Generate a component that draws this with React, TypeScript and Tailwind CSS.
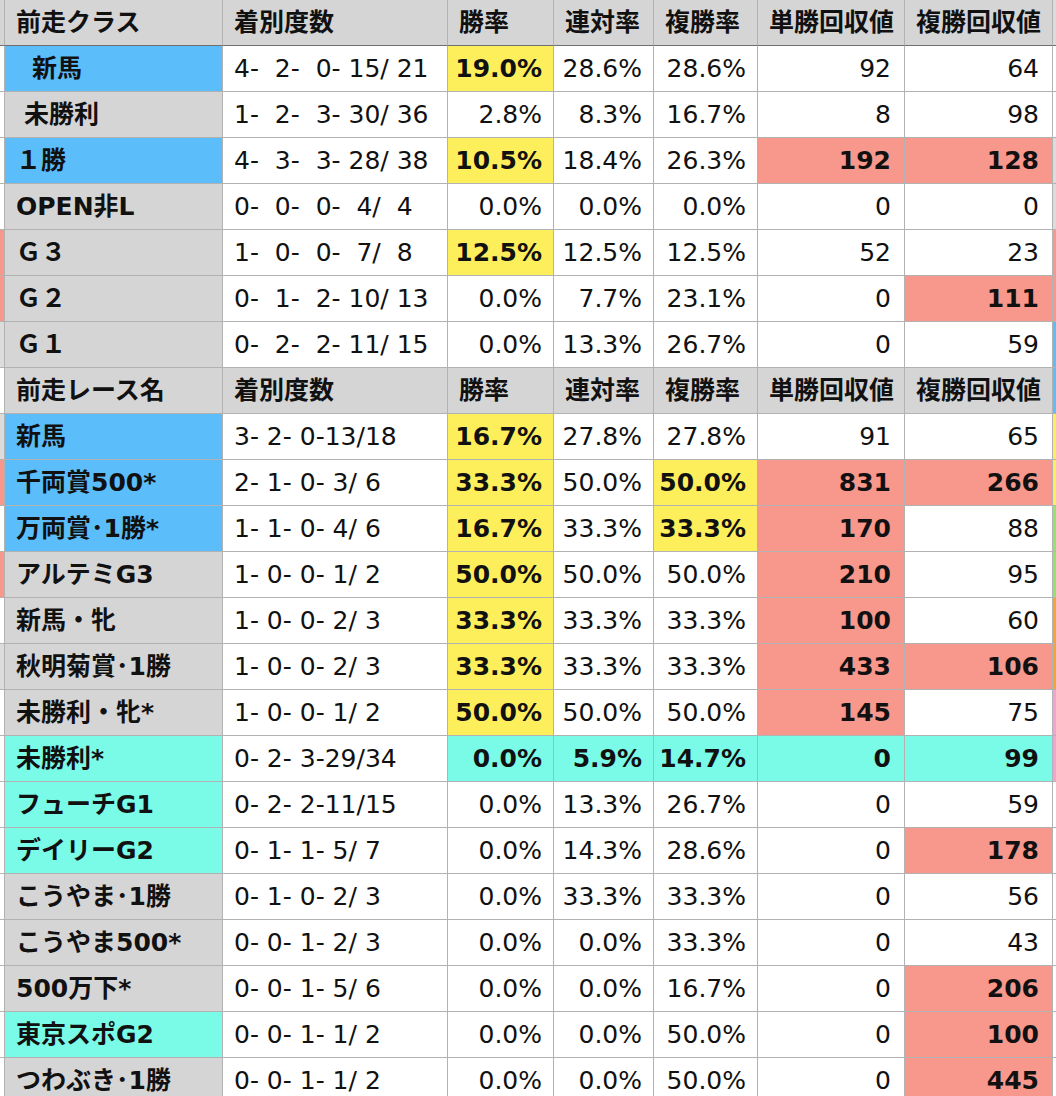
import React from "react";

// cell backgrounds, copied off the spreadsheet colours
const BLUE = "bg-[#5bbefb]";
const GRAY = "bg-[#d5d5d5]";
const YEL = "bg-[#fdef5b]";
const SAL = "bg-[#f8978b]";
const CYAN = "bg-[#7afbe7]";
const WHITE = "bg-white";
const LGRAY = "bg-[#dcdcdc]";
const GREEN = "bg-[#93e46c]";
const ORANGE = "bg-[#f6a532]";
const PINK = "bg-[#f3a2d2]";

type Stat = { t: string; bg?: string };

type RowData = {
  label: string;
  labelBg: string;
  indent?: string;
  rec: string;
  stats: Stat[]; // 勝率, 連対率, 複勝率, 単勝回収値, 複勝回収値
  left: string;
  right: string;
};

const HEAD1 = ["前走クラス", "着別度数", "勝率", "連対率", "複勝率", "単勝回収値", "複勝回収値"];
const HEAD2 = ["前走レース名", "着別度数", "勝率", "連対率", "複勝率", "単勝回収値", "複勝回収値"];

const s = (t: string, bg?: string): Stat => ({ t, bg });

const classRows: RowData[] = [
  { label: "新馬", labelBg: BLUE, indent: "pl-[27px]", rec: "4-  2-  0- 15/ 21", stats: [s("19.0%", YEL), s("28.6%"), s("28.6%"), s("92"), s("64")], left: WHITE, right: WHITE },
  { label: "未勝利", labelBg: GRAY, indent: "pl-[19px]", rec: "1-  2-  3- 30/ 36", stats: [s("2.8%"), s("8.3%"), s("16.7%"), s("8"), s("98")], left: WHITE, right: WHITE },
  { label: "１勝", labelBg: BLUE, rec: "4-  3-  3- 28/ 38", stats: [s("10.5%", YEL), s("18.4%"), s("26.3%"), s("192", SAL), s("128", SAL)], left: WHITE, right: LGRAY },
  { label: "OPEN非L", labelBg: GRAY, rec: "0-  0-  0-  4/  4", stats: [s("0.0%"), s("0.0%"), s("0.0%"), s("0"), s("0")], left: WHITE, right: LGRAY },
  { label: "Ｇ３", labelBg: GRAY, rec: "1-  0-  0-  7/  8", stats: [s("12.5%", YEL), s("12.5%"), s("12.5%"), s("52"), s("23")], left: SAL, right: SAL },
  { label: "Ｇ２", labelBg: GRAY, rec: "0-  1-  2- 10/ 13", stats: [s("0.0%"), s("7.7%"), s("23.1%"), s("0"), s("111", SAL)], left: SAL, right: SAL },
  { label: "Ｇ１", labelBg: GRAY, rec: "0-  2-  2- 11/ 15", stats: [s("0.0%"), s("13.3%"), s("26.7%"), s("0"), s("59")], left: LGRAY, right: BLUE },
];

const raceRows: RowData[] = [
  { label: "新馬", labelBg: BLUE, rec: "3- 2- 0-13/18", stats: [s("16.7%", YEL), s("27.8%"), s("27.8%"), s("91"), s("65")], left: LGRAY, right: YEL },
  { label: "千両賞500*", labelBg: BLUE, rec: "2- 1- 0- 3/ 6", stats: [s("33.3%", YEL), s("50.0%"), s("50.0%", YEL), s("831", SAL), s("266", SAL)], left: SAL, right: YEL },
  { label: "万両賞･1勝*", labelBg: BLUE, rec: "1- 1- 0- 4/ 6", stats: [s("16.7%", YEL), s("33.3%"), s("33.3%", YEL), s("170", SAL), s("88")], left: WHITE, right: GREEN },
  { label: "アルテミG3", labelBg: GRAY, rec: "1- 0- 0- 1/ 2", stats: [s("50.0%", YEL), s("50.0%"), s("50.0%"), s("210", SAL), s("95")], left: SAL, right: GREEN },
  { label: "新馬・牝", labelBg: GRAY, rec: "1- 0- 0- 2/ 3", stats: [s("33.3%", YEL), s("33.3%"), s("33.3%"), s("100", SAL), s("60")], left: WHITE, right: ORANGE },
  { label: "秋明菊賞･1勝", labelBg: GRAY, rec: "1- 0- 0- 2/ 3", stats: [s("33.3%", YEL), s("33.3%"), s("33.3%"), s("433", SAL), s("106", SAL)], left: LGRAY, right: ORANGE },
  { label: "未勝利・牝*", labelBg: GRAY, rec: "1- 0- 0- 1/ 2", stats: [s("50.0%", YEL), s("50.0%"), s("50.0%"), s("145", SAL), s("75")], left: WHITE, right: PINK },
  { label: "未勝利*", labelBg: CYAN, rec: "0- 2- 3-29/34", stats: [s("0.0%", CYAN), s("5.9%", CYAN), s("14.7%", CYAN), s("0", CYAN), s("99", CYAN)], left: WHITE, right: PINK },
  { label: "フューチG1", labelBg: CYAN, rec: "0- 2- 2-11/15", stats: [s("0.0%"), s("13.3%"), s("26.7%"), s("0"), s("59")], left: WHITE, right: WHITE },
  { label: "デイリーG2", labelBg: CYAN, rec: "0- 1- 1- 5/ 7", stats: [s("0.0%"), s("14.3%"), s("28.6%"), s("0"), s("178", SAL)], left: WHITE, right: WHITE },
  { label: "こうやま･1勝", labelBg: GRAY, rec: "0- 1- 0- 2/ 3", stats: [s("0.0%"), s("33.3%"), s("33.3%"), s("0"), s("56")], left: WHITE, right: WHITE },
  { label: "こうやま500*", labelBg: GRAY, rec: "0- 0- 1- 2/ 3", stats: [s("0.0%"), s("0.0%"), s("33.3%"), s("0"), s("43")], left: WHITE, right: WHITE },
  { label: "500万下*", labelBg: GRAY, rec: "0- 0- 1- 5/ 6", stats: [s("0.0%"), s("0.0%"), s("16.7%"), s("0"), s("206", SAL)], left: WHITE, right: WHITE },
  { label: "東京スポG2", labelBg: CYAN, rec: "0- 0- 1- 1/ 2", stats: [s("0.0%"), s("0.0%"), s("50.0%"), s("0"), s("100", SAL)], left: WHITE, right: WHITE },
  { label: "つわぶき･1勝", labelBg: GRAY, rec: "0- 0- 1- 1/ 2", stats: [s("0.0%"), s("0.0%"), s("50.0%"), s("0"), s("445", SAL)], left: WHITE, right: WHITE },
];

const GRID = "grid h-[46px] grid-cols-[5px_218px_225px_106px_100px_104px_147px_148px_3px]";
const CELL = "flex items-center border-r border-b border-[#b2b2b2]";

function HeaderRow({ cells, left, right, dark }: { cells: string[]; left: string; right: string; dark?: boolean }) {
  const b = dark ? "border-b-[#6f6f6f]" : "";
  return (
    <div className={GRID}>
      <div className={`${CELL} ${b} ${left}`} />
      {cells.map((c, i) => (
        <div key={i} className={`${CELL} ${b} ${GRAY} pl-[11px] font-bold`}>
          {c}
        </div>
      ))}
      <div className={`border-b border-[#b2b2b2] ${b} ${right}`} />
    </div>
  );
}

function DataRow({ r }: { r: RowData }) {
  return (
    <div className={GRID}>
      <div className={`${CELL} ${r.left}`} />
      <div className={`${CELL} ${r.labelBg} ${r.indent ?? "pl-[11px]"} font-bold`}>{r.label}</div>
      <div className={`${CELL} bg-white pl-[11px] whitespace-pre`}>{r.rec}</div>
      {r.stats.map((st, i) => (
        <div
          key={i}
          className={`${CELL} ${st.bg ?? WHITE} justify-end ${i >= 3 ? "pr-[13px]" : "pr-[11px]"} ${st.bg ? "font-bold" : ""}`}
        >
          {st.t}
        </div>
      ))}
      <div className={`border-b border-[#b2b2b2] ${r.right}`} />
    </div>
  );
}

export default function App() {
  return (
    <div className="h-[1096px] w-[1056px] overflow-hidden bg-white font-['DejaVu_Sans','Noto_Sans_CJK_JP',sans-serif] text-[25px] leading-none text-[#111]">
      <HeaderRow cells={HEAD1} left={GRAY} right={LGRAY} dark />
      {classRows.map((r, i) => (
        <DataRow key={`c${i}`} r={r} />
      ))}
      <HeaderRow cells={HEAD2} left={WHITE} right={BLUE} />
      {raceRows.map((r, i) => (
        <DataRow key={`r${i}`} r={r} />
      ))}
    </div>
  );
}
